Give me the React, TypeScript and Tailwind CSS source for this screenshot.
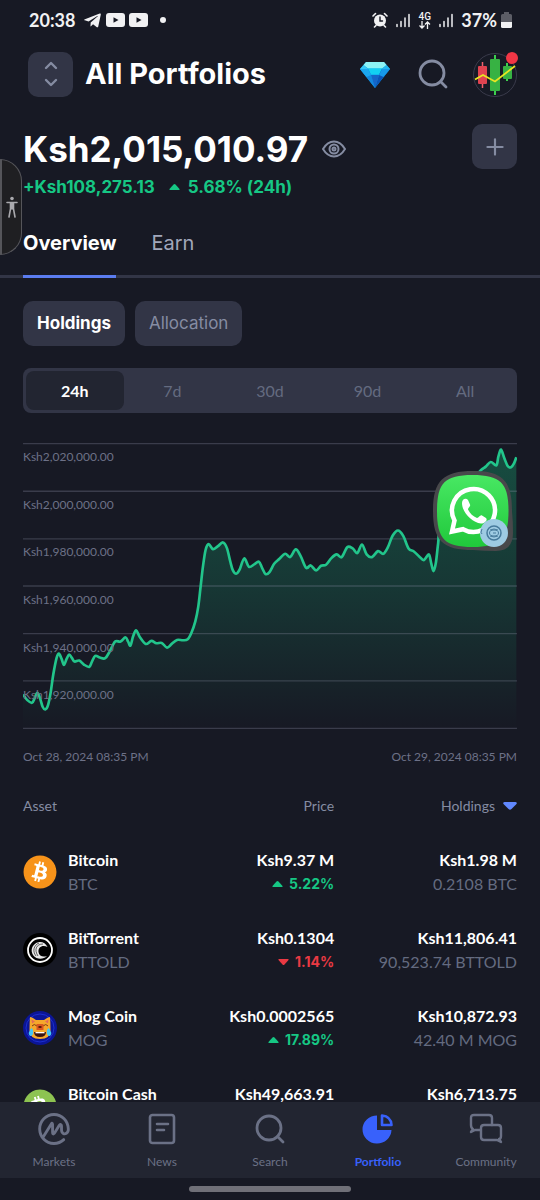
import { useState } from "react";
import { Plus } from "lucide-react";
import { FaBitcoin, FaTelegramPlane } from "react-icons/fa";
import { SiCoinmarketcap } from "react-icons/si";
import clsx from "clsx";

const HAND = "font-['Lato','Noto_Sans',sans-serif]";

const RANGES = ["24h", "7d", "30d", "90d", "All"];

const LEVELS = [
  "Ksh2,020,000.00",
  "Ksh2,000,000.00",
  "Ksh1,980,000.00",
  "Ksh1,960,000.00",
  "Ksh1,940,000.00",
  "Ksh1,920,000.00",
];

const GRID = [41, 184, 327, 469, 612, 754, 897];

// portfolio value over the last 24h, in chart units
const POINTS: [number, number][] = [
  [69, 795], [82, 812], [96, 820], [104, 806], [112, 790], [120, 806], [128, 832], [136, 840],
  [144, 828], [152, 790], [160, 735], [170, 685], [177, 672], [185, 688], [192, 706], [200, 688],
  [208, 675], [216, 685], [224, 696], [238, 693], [252, 705], [268, 712], [276, 697], [286, 679],
  [300, 684], [316, 686], [330, 665], [346, 636], [362, 636], [377, 623], [385, 636], [392, 648],
  [400, 620], [409, 602], [420, 622], [438, 643], [455, 634], [470, 641], [486, 640], [502, 654],
  [516, 643], [532, 631], [550, 632], [564, 629], [575, 610], [587, 575], [596, 530], [603, 470],
  [610, 410], [618, 360], [627, 343], [640, 358], [654, 350], [670, 338], [682, 355], [692, 395],
  [700, 422], [710, 432], [720, 420], [734, 386], [748, 411], [764, 404], [778, 396], [788, 415],
  [798, 433], [810, 427], [824, 402], [840, 387], [857, 372], [872, 382], [889, 359], [904, 380],
  [920, 414], [934, 407], [950, 422], [965, 408], [980, 405], [996, 385], [1012, 374], [1027, 382],
  [1044, 352], [1060, 356], [1074, 370], [1088, 344], [1102, 374], [1118, 382], [1136, 364],
  [1152, 372], [1166, 352], [1180, 318], [1196, 302], [1212, 318], [1228, 356], [1244, 365],
  [1260, 380], [1274, 391], [1289, 374], [1296, 400], [1303, 424], [1310, 400], [1317, 340],
  [1325, 280], [1370, 200], [1410, 160], [1444, 122], [1460, 110], [1475, 96], [1492, 106],
  [1498, 80], [1506, 59], [1516, 85], [1526, 108], [1536, 112], [1545, 100], [1552, 82],
];

function smoothPath(pts: [number, number][]) {
  let d = `M${pts[0][0]} ${pts[0][1]}`;
  for (let i = 0; i < pts.length - 1; i++) {
    const p0 = pts[i - 1] ?? pts[i];
    const p1 = pts[i];
    const p2 = pts[i + 1];
    const p3 = pts[i + 2] ?? p2;
    d += ` C${p1[0] + (p2[0] - p0[0]) / 6} ${p1[1] + (p2[1] - p0[1]) / 6} ${p2[0] - (p3[0] - p1[0]) / 6} ${p2[1] - (p3[1] - p1[1]) / 6} ${p2[0]} ${p2[1]}`;
  }
  return d;
}

const LINE = smoothPath(POINTS);

const Youtube = () => (
  <svg viewBox="0 0 19 14" className="h-3.5 w-[19px]">
    <rect width="19" height="14" rx="3" fill="#f1f1f3" />
    <path d="M7.500 4.300 12.500 7 7.500 9.700z" fill="#171924" />
  </svg>
);

const Signal = () => (
  <svg viewBox="0 0 14 15" className="h-[15px] w-3.5" stroke="#f1f1f3" strokeWidth="1.500" strokeLinecap="round">
    <path d="M1 11.500v2M5 8.500v5M9 5v8.500M13 1.500v12" />
  </svg>
);

const StatusBar = () => (
  <div className={clsx(HAND, "flex h-10 items-center justify-between pr-7 pl-[29px] text-[#f1f1f3]")}>
    <div className="flex items-center gap-1">
      <span className="mr-1 text-lg font-bold">20:38</span>
      <FaTelegramPlane className="h-[19px] w-[19px]" />
      <Youtube />
      <Youtube />
      <span className="ml-2 h-1.5 w-1.5 rounded-full bg-[#f1f1f3]" />
    </div>
    <div className="flex items-center gap-2">
      <svg viewBox="0 0 16 16" className="h-4 w-4" fill="none" strokeLinecap="round">
        <circle cx="8" cy="8.500" r="6" fill="#f1f1f3" />
        <path d="M1 4 3.500 1.500M15 4l-2.500-2.500M4 13.500 2.500 15M12 13.500l1.500 1.500" stroke="#f1f1f3" strokeWidth="1.600" />
        <path d="M8 5v4h2.500" stroke="#171924" strokeWidth="1.400" />
      </svg>
      <Signal />
      <div className="flex flex-col items-center">
        <span className="font-['Roboto',sans-serif] text-[10px] leading-[9px] font-medium">4G</span>
        <svg viewBox="0 0 13 8" className="h-2 w-[13px]" fill="none" stroke="#f1f1f3" strokeWidth="1.300">
          <path d="M4 0v7M1.500 4.500 4 7l2.500-2.500M9.500 8V1M7 3.500 9.500 1 12 3.500" />
        </svg>
      </div>
      <Signal />
      <div className="flex items-center gap-1">
        <span className="text-lg font-bold">37%</span>
        <svg viewBox="0 0 11 16" className="h-4 w-[11px]">
          <path d="M3 0h5v2h1.500A1.500 1.500 0 0 1 11 3.500V10H0V3.500A1.500 1.500 0 0 1 1.500 2H3z" fill="#5c5d66" />
          <path d="M0 10h11v4.500A1.500 1.500 0 0 1 9.500 16h-8A1.500 1.500 0 0 1 0 14.500z" fill="#f1f1f3" />
        </svg>
      </div>
    </div>
  </div>
);

const SearchIcon = () => (
  <svg viewBox="0 0 30 30" className="h-[30px] w-[30px]" fill="none" stroke="currentColor" strokeWidth="2.800" strokeLinecap="round">
    <circle cx="14" cy="14" r="12" />
    <path d="m22.500 22.500 5.500 5.500" />
  </svg>
);

const Diamond = () => (
  <svg viewBox="0 0 30 27" className="h-[27px] w-[30px]">
    <path d="M6 1h18l6 7-15 19L0 8z" fill="#0aa5ea" />
    <path d="M6 1h18l2.500 3L22 7.500H8L3.500 4z" fill="#8df3f5" />
    <path d="M3.500 4 8 8 0 8z" fill="#35c8f5" />
    <path d="M26.500 4 22 8h8z" fill="#21b6ef" />
    <path d="M8 7.500h14l-3 6h-8z" fill="#12d0f2" />
    <path d="M0 8h8l3 6 4 13z" fill="#1487dd" />
    <path d="M11 14h8l-4 13z" fill="#1565c8" />
    <path d="M30 8h-8l-3 6-4 13z" fill="#0b54b8" />
    <path d="M22 8h8l-6.500 8L19 14z" fill="#1699ea" />
    <path d="M8 8H0l6.500 8L11 14z" fill="#1ba7ef" />
  </svg>
);

const Avatar = () => (
  <svg viewBox="0 0 46 46" className="h-[46px] w-[46px]">
    <circle cx="23" cy="24" r="21.500" fill="#171a25" stroke="#3a3b4b" />
    <path d="M10.500 11v26" stroke="#f0616d" strokeWidth="1.500" />
    <rect x="6" y="15" width="9" height="18" rx="1" fill="#e04350" />
    <path d="M23 4v40" stroke="#3ccf4e" strokeWidth="2" />
    <rect x="18" y="8" width="10" height="32" rx="1" fill="#37b243" />
    <path d="M35 12v18" stroke="#3ccf4e" strokeWidth="2" />
    <rect x="31" y="15" width="9" height="13" rx="1" fill="#37b243" />
    <path d="M3 28.500 11 24l12 6.500L43 15" stroke="#e8e622" strokeWidth="1.800" fill="none" />
    <circle cx="40" cy="7" r="6" fill="#f23645" />
  </svg>
);

const Header = () => (
  <header className="flex h-[68px] items-center pr-[22px] pl-7">
    <button aria-label="Switch portfolio" className="flex h-[45px] w-[45px] items-center justify-center rounded-[10px] bg-[#323546] text-[#858ca2]">
      <svg viewBox="0 0 14 28" className="h-7 w-3.5" fill="none" stroke="currentColor" strokeWidth="2.400" strokeLinecap="round" strokeLinejoin="round">
        <path d="M2 8l5-5 5 5M2 20l5 5 5-5" />
      </svg>
    </button>
    <h1 className="ml-3 text-[29px] font-bold">All Portfolios</h1>
    <div className="ml-auto flex items-center gap-7 text-[#858ca2]">
      <button aria-label="Rewards"><Diamond /></button>
      <button aria-label="Search"><SearchIcon /></button>
      <button aria-label="Profile" className="-ml-1"><Avatar /></button>
    </div>
  </header>
);

const Caret = ({ down = false }: { down?: boolean }) => (
  <svg viewBox="0 0 11 6" className={clsx("h-1.5 w-[11px]", down && "rotate-180")} fill="currentColor">
    <path d="M5.500 0Q6 0 6.500.5L10.500 5q.5 1-.5 1H1Q0 6 .5 5L4.500.5Q5 0 5.500 0z" />
  </svg>
);

const Balance = () => (
  <section className="flex items-start justify-between px-[23px] pt-1.5">
    <div className="pt-[13px]">
      <div className="flex items-center gap-3.5">
        <span className="text-[35px] leading-[44px] font-bold">Ksh2,015,010.97</span>
        <button aria-label="Hide balance" className="text-[#858ca2]">
          <svg viewBox="0 0 24 18" className="h-[18px] w-6" fill="none" stroke="currentColor" strokeWidth="2">
            <path d="M1 9Q5.500 1.500 12 1.500T23 9q-4.500 7.500-11 7.500T1 9z" strokeLinejoin="round" />
            <circle cx="12" cy="9" r="4.500" />
            <circle cx="12" cy="9" r="1.500" />
          </svg>
        </button>
      </div>
      <div className="flex items-center pt-1 text-[17px] leading-6 font-bold text-[#16c784]">
        <span>+Ksh108,275.13</span>
        <span className="mr-2 ml-3.5"><Caret /></span>
        <span>5.68% (24h)</span>
      </div>
    </div>
    <button aria-label="Add transaction" className="mt-2.5 flex h-[45px] w-[45px] items-center justify-center rounded-[10px] bg-[#323546] text-[#858ca2]">
      <Plus className="h-[26px] w-[26px]" />
    </button>
  </section>
);

const WhatsAppBubble = () => (
  <button aria-label="WhatsApp" className="absolute top-7 right-1 h-20 w-20">
    <svg viewBox="0 0 80 80" className="h-20 w-20" fill="none">
      <defs>
        <linearGradient id="wa" x1="0" y1="0" x2="0" y2="1">
          <stop offset="0" stopColor="#48e863" />
          <stop offset="1" stopColor="#20c83b" />
        </linearGradient>
      </defs>
      <path d="M40 0C70 0 79 10 79 40q1 10 1 22c0 12-6 18-17 18q-12 0-23-1C10 79 0 70 0 40S10 0 40 0z" fill="#48484b" />
      <path d="M39.500 4c28 0 36 8 36 36s-8 36-36 36S4 68 4 40 11.500 4 39.500 4z" fill="url(#wa)" />
      <path d="M21.500 49.500A21.500 21.500 0 1 1 30 58.200L19 60.500z" stroke="#fff" strokeWidth="4.500" />
      <path d="M29 32c0-4 4-5.500 6-3l2 4.500c1 2-2 3-2 5 2 4 5 7 9 8.500 2 0 3-3.500 5-2.500l4 2.500c2 2-1 5.500-5 5.500-9-1-19-11-19-20.500z" fill="#fff" />
      <circle cx="61" cy="62" r="14" fill="#9ecbe3" />
      <circle cx="61" cy="62" r="7" stroke="#467a9c" strokeWidth="1.500" />
      <ellipse cx="61" cy="62" rx="4.500" ry="3" stroke="#467a9c" />
      <path d="M57 59q4-2 8 0M57 65q4 2 8 0M60 62h3M49 58q-2 4 0 5" stroke="#467a9c" />
    </svg>
  </button>
);

const Chart = () => (
  <div className={clsx(HAND, "mt-[30px]")}>
    <div className="relative">
      <svg viewBox="69 39 1485 860" className="block w-full" role="img" aria-label="Portfolio value, last 24 hours">
        <defs>
          <linearGradient id="fill" gradientUnits="userSpaceOnUse" x1="0" y1="60" x2="0" y2="897">
            <stop offset="0" stopColor="#16c784" stopOpacity="0.300" />
            <stop offset="0.500" stopColor="#16c784" stopOpacity="0.170" />
            <stop offset="1" stopColor="#16c784" stopOpacity="0" />
          </linearGradient>
        </defs>
        <path d={`${LINE} L1552 897 L69 897 Z`} fill="url(#fill)" />
        {GRID.map((y) => (
          <path key={y} d={`M69 ${y}H1554`} stroke="#8c90a4" strokeOpacity="0.300" strokeWidth="4" />
        ))}
        <path d={LINE} fill="none" stroke="#22c58b" strokeWidth="8" strokeLinejoin="round" />
      </svg>
      <div className="pointer-events-none absolute inset-0 grid grid-rows-6 text-xs text-[#6d7187]">
        {LEVELS.map((level) => (
          <span key={level} className="pt-1.5">{level}</span>
        ))}
      </div>
      <WhatsAppBubble />
    </div>
    <div className="mt-4 flex justify-between text-xs leading-6 text-[#6d7187]">
      <span>Oct 28, 2024 08:35 PM</span>
      <span>Oct 29, 2024 08:35 PM</span>
    </div>
  </div>
);

const BttLogo = () => (
  <svg viewBox="0 0 34 34" className="h-[34px] w-[34px]" fill="none" stroke="#fff">
    <circle cx="17" cy="17" r="17" fill="#000" stroke="none" />
    <circle cx="17" cy="17" r="12" strokeWidth="1.800" />
    <path d="M24.500 14c-2-5-8-6.500-12-3.500-6 4-4.500 12 1 14.500 4 1.500 8 .500 10.500-2-4 1.500-8 0-8.500-4-.500-5 4-7.500 9-5z" fill="#e8e8e8" stroke="none" />
    <path d="M20 11c-7 0-9 6-5 12M16 10c-5 2-7 8-3 13" stroke="#000" strokeWidth="0.600" />
  </svg>
);

const MogLogo = () => (
  <svg viewBox="0 0 34 34" className="h-[34px] w-[34px]">
    <circle cx="17" cy="17" r="17" fill="#0b1596" />
    <circle cx="17" cy="17" r="14" fill="none" stroke="#1d2fd0" />
    <path d="M7 6q2 0 6 3h8q4-3 6-3 .500 6 .500 13 0 9-10.500 9T6.500 19Q6.500 12 7 6z" fill="#f5a82c" />
    <path d="M8.500 8.500l3.500 2-3 2zM25.500 8.500l-3.500 2 3 2z" fill="#e2695a" />
    <path d="M9 15q2-3 5 0M20 15q3-3 5 0" fill="none" stroke="#7a3a14" />
    <rect x="13.500" y="13" width="7" height="6" fill="#d9571f" />
    <path d="M15.500 15h3v2h-3z" fill="#5c1d0a" />
    <path d="M11 21h12q0 5-6 5t-6-5z" fill="#3a1410" />
    <path d="M12.500 21h9v1.300h-9z" fill="#fff" />
    <path d="M8.500 17q-4.500 5-1.500 8 4 0 3-6zM25.500 17q4.500 5 1.500 8-4 0-3-6z" fill="#45c6f5" />
  </svg>
);

// the B is cut out of the disc, so a white core shows through it
const CoinLogo = ({ color, tilt }: { color: string; tilt?: string }) => (
  <span className="block rounded-full bg-[radial-gradient(circle,white_60%,transparent_60%)]">
    <FaBitcoin className={clsx("h-[34px] w-[34px]", color, tilt)} />
  </span>
);

const ASSETS = [
  { name: "Bitcoin", symbol: "BTC", price: "Ksh9.37 M", change: "5.22%", up: true, value: "Ksh1.98 M", amount: "0.2108 BTC", logo: <CoinLogo color="text-[#f7931a]" /> },
  { name: "BitTorrent", symbol: "BTTOLD", price: "Ksh0.1304", change: "1.14%", up: false, value: "Ksh11,806.41", amount: "90,523.74 BTTOLD", logo: <BttLogo /> },
  { name: "Mog Coin", symbol: "MOG", price: "Ksh0.0002565", change: "17.89%", up: true, value: "Ksh10,872.93", amount: "42.40 M MOG", logo: <MogLogo /> },
  { name: "Bitcoin Cash", symbol: "", price: "Ksh49,663.91", change: "", up: true, value: "Ksh6,713.75", amount: "", logo: <CoinLogo color="text-[#8dc351]" tilt="-rotate-30" /> },
];

const AssetTable = () => (
  <table className={clsx(HAND, "mt-[25px] w-full table-fixed text-base leading-6")}>
    <thead className="text-sm leading-6 text-[#858ca2]">
      <tr>
        <th className="w-[34%] pb-3 text-left font-normal">Asset</th>
        <th className="w-[29%] pb-3 text-right font-normal">Price</th>
        <th className="w-[37%] pb-3 text-right font-normal">
          <button className="inline-flex items-center gap-2">
            Holdings
            <svg viewBox="0 0 14 8" className="h-2 w-3.5" fill="#6188ff">
              <path d="M1.500 0h11Q15 .5 13 2.500L8.500 7Q7 8.500 5.500 7L1 2.500Q-1 .5 1.500 0z" />
            </svg>
          </button>
        </th>
      </tr>
    </thead>
    <tbody>
      {ASSETS.map((asset) => (
        <tr key={asset.name} className="h-[78px]">
          <td className="pt-1.5">
            <div className="flex items-center gap-[11px] whitespace-nowrap">
              {asset.logo}
              <div>
                <div className="font-bold">{asset.name}</div>
                <div className="h-6 text-[#646b80]">{asset.symbol}</div>
              </div>
            </div>
          </td>
          <td className="pt-1.5 text-right">
            <div className="font-bold">{asset.price}</div>
            <div className={clsx("flex h-6 items-center justify-end gap-1.5 font-['Inter',sans-serif] text-sm leading-6 font-bold", asset.up ? "text-[#16c784]" : "text-[#ea3943]")}>
              {asset.change && <Caret down={!asset.up} />}
              {asset.change}
            </div>
          </td>
          <td className="pt-1.5 text-right whitespace-nowrap">
            <div className="font-bold">{asset.value}</div>
            <div className="h-6 text-[#646b80]">{asset.amount}</div>
          </td>
        </tr>
      ))}
    </tbody>
  </table>
);

const NewsIcon = () => (
  <svg viewBox="0 0 34 34" className="h-[34px] w-[34px]" fill="none" stroke="currentColor" strokeWidth="2.600" strokeLinecap="round">
    <rect x="5" y="3" width="24" height="28" rx="2.500" />
    <path d="M12 12h11M12 18h7" />
  </svg>
);

const PieIcon = () => (
  <svg viewBox="0 0 34 34" className="h-[34px] w-[34px]" fill="none" stroke="currentColor">
    <path d="M16 3.500V18h14.500A14.500 14 0 1 1 16 3.500z" fill="currentColor" stroke="none" />
    <path d="M21 3.500v9.500h9.500q-.5-8.500-9.500-9.500z" strokeWidth="2.600" strokeLinejoin="round" />
  </svg>
);

const ChatIcon = () => (
  <svg viewBox="0 0 34 34" className="h-[34px] w-[34px]" fill="none" stroke="currentColor" strokeWidth="2.400" strokeLinecap="round" strokeLinejoin="round">
    <path d="M23 13V6q0-3-3-3H5Q2 3 2 6v7q0 3 2 4l-2 3 4-2h5" />
    <path d="M15 13h14q3 0 3 3v8q0 3-2 3l2 3-4-2H15q-3 0-3-3v-9q0-3 3-3z" />
  </svg>
);

const NAV = [
  { label: "Markets", icon: <SiCoinmarketcap className="h-8 w-8" /> },
  { label: "News", icon: <NewsIcon /> },
  { label: "Search", icon: <SearchIcon /> },
  { label: "Portfolio", icon: <PieIcon />, active: true },
  { label: "Community", icon: <ChatIcon /> },
];

const BottomNav = () => (
  <footer className="shrink-0">
    <nav className={clsx(HAND, "grid h-[76px] grid-cols-5 bg-[#222531] text-xs")}>
      {NAV.map((item) => (
        <a key={item.label} href="#" className={clsx("flex flex-col items-center pt-2.5", item.active ? "font-bold text-[#3861fb]" : "text-[#6b7186]")}>
          <span className="flex h-[34px] items-center">{item.icon}</span>
          <span className="mt-1.5 leading-5">{item.label}</span>
        </a>
      ))}
    </nav>
    <div className="flex h-[22px] items-center justify-center">
      <div className="h-1.5 w-[30%] rounded-full bg-[#707078]" />
    </div>
  </footer>
);

const App = () => {
  const [range, setRange] = useState("24h");

  return (
    <div className="relative flex h-screen flex-col overflow-hidden bg-[#171924] font-['Inter',sans-serif] text-white">
      <StatusBar />
      <Header />
      <main className="min-h-0 flex-1 overflow-y-auto [scrollbar-width:none]">
        <Balance />
        <div className="mt-[30px] flex gap-[35px] border-b-3 border-[#323546] px-[23px] text-xl">
          <button className="-mb-[3px] border-b-3 border-[#5b7cf0] pb-[18px] font-bold">Overview</button>
          <button className="-mb-[3px] pb-[21px] text-[#a1a7bb]">Earn</button>
        </div>
        <div className="px-[23px]">
          <div className="mt-[23px] flex gap-2.5 text-[17px]">
            <button className="h-[45px] rounded-[10px] bg-[#323546] px-3.5 font-bold">Holdings</button>
            <button className="h-[45px] rounded-[10px] bg-[#323546] px-3.5 text-[#858ca2]">Allocation</button>
          </div>
          <div className={clsx(HAND, "mt-[22px] flex h-[45px] rounded-lg bg-[#323546] p-[3px] text-base")}>
            {RANGES.map((item) => (
              <button
                key={item}
                onClick={() => setRange(item)}
                className={clsx("flex-1 rounded-lg", item === range ? "bg-[#222531] font-bold text-white" : "text-[#646b80]")}
              >
                {item}
              </button>
            ))}
          </div>
          <Chart />
          <AssetTable />
        </div>
      </main>
      <BottomNav />
      <button aria-label="Accessibility" className="absolute top-[159px] left-0 flex h-24 w-[22px] items-center justify-center rounded-r-[22px] border border-l-2 border-[#55555a] bg-[#1f1f22]">
        <svg viewBox="0 0 12 22" className="h-[22px] w-3" fill="none" stroke="#a9a9ad" strokeWidth="1.600" strokeLinecap="round">
          <circle cx="6" cy="2.500" r="1.800" fill="#a9a9ad" stroke="none" />
          <path d="M1 6.500h10M4.500 7v6L3 21M7.500 7v6L9 21M6 7v6" />
        </svg>
      </button>
    </div>
  );
};

export default App;
